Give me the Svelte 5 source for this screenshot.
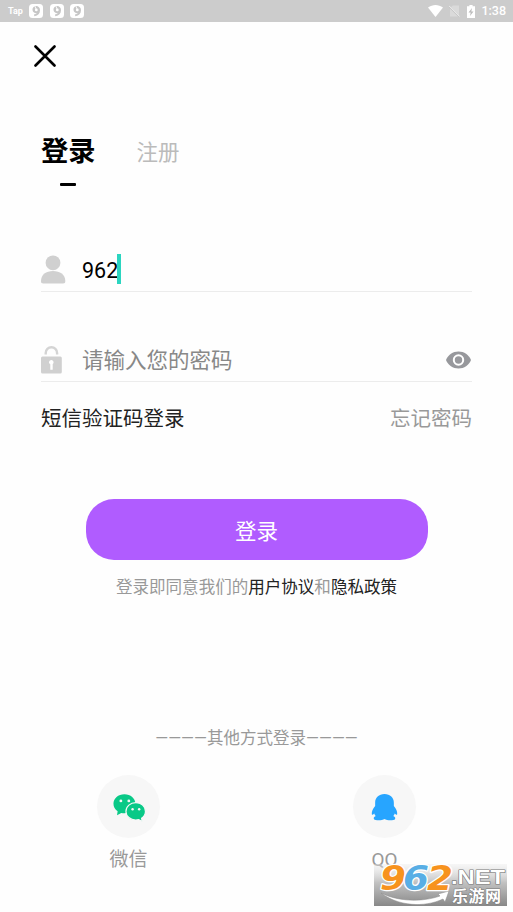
<script lang="ts">
  let account = '962';
  let password = '';

  // notification badges shown next to the "Tap" label
  const badges = [0, 1, 2];
</script>

<div class="screen">
  <header class="status">
    <span class="tap">Tap</span>
    {#each badges as badge (badge)}
      <svg class="badge" viewBox="0 0 14 14" aria-hidden="true">
        <rect width="14" height="14" rx="3.5" fill="#fff" />
        <path d="M7 2a4 4 0 0 1 4 4.200c0 3.300-2 5.500-5.600 6l-.5-1.600c1.500-.3 2.500-.8 3-1.500A3.600 3.600 0 1 1 7 2z" fill="#c6c6c6" />
        <circle cx="7.300" cy="5.900" r="1.400" fill="#fff" />
        <path d="M5.800 2l1.500 3.500" stroke="#fff" stroke-width=".9" />
      </svg>
    {/each}
    <div class="system">
      <svg width="15" height="12" viewBox="0 0 15 12" aria-hidden="true">
        <path d="M0 2.600C4.500-.8 10.500-.8 15 2.600L7.500 12z" fill="#fff" />
      </svg>
      <svg width="11" height="12" viewBox="0 0 11 12" aria-hidden="true">
        <path d="M3.800.5H10V11.500H1V3.300z" fill="#dadada" />
        <path d="M0 1.500l10.700 10.500" stroke="#c4c4c4" stroke-width="1.500" />
        <path d="M0 .8l10.800 10.800" stroke="#f0f0f0" stroke-width="1" />
      </svg>
      <svg width="8" height="13" viewBox="0 0 8 13" aria-hidden="true">
        <path d="M2.400 0h3.200v1.300H8V13H0V1.300h2.400z" fill="#fff" />
        <path d="M5 3L1.500 7.600h2.200L3 11l3.500-4.600H4.300z" fill="#bbb" />
      </svg>
      <span class="time">1:38</span>
    </div>
  </header>

  <main>
    <button class="close" type="button" aria-label="关闭">
      <svg width="22" height="22" viewBox="0 0 22 22">
        <path d="M1.500 1.500l19 19M20.500 1.500l-19 19" stroke="#000" stroke-width="2.600" stroke-linecap="round" />
      </svg>
    </button>

    <nav class="tabs">
      <button class="tab active" type="button">登录</button>
      <button class="tab" type="button">注册</button>
    </nav>

    <div class="field account">
      <svg class="icon" width="25" height="29" viewBox="0 0 25 29" aria-hidden="true">
        <circle cx="12" cy="7.800" r="7.400" fill="#d0d0d0" />
        <path d="M0 26C0 19.500 5 16 12 16s12.300 3.500 12.300 10c0 1.800-.6 2.500-2.300 2.500H2.300C.6 28.500 0 27.800 0 26z" fill="#d0d0d0" />
      </svg>
      <span class="value">{account}</span>
      <span class="caret"></span>
    </div>

    <div class="field password">
      <svg class="icon" width="25" height="29" viewBox="0 0 25 29" aria-hidden="true">
        <path d="M4.700 9.500V8a5.700 5.700 0 0 1 11.400 0v1.500" fill="none" stroke="#d4d4d4" stroke-width="2.400" />
        <rect y="11.500" width="20.800" height="17" rx="1.500" fill="#d0d0d0" />
        <path d="M8 17.500a2.300 2.300 0 1 1 3.700 1.600v5.700H9.300v-5.500A2.300 2.300 0 0 1 8 17.500z" fill="#fff" />
      </svg>
      <input type="text" placeholder="请输入您的密码" bind:value={password} />
      <svg class="eye" width="25" height="18" viewBox="0 0 25 18" aria-hidden="true">
        <path d="M0 9C2.200 3.700 6.800.5 12.500.5S22.800 3.700 25 9c-2.200 5.300-6.800 8.500-12.500 8.500S2.200 14.300 0 9z" fill="#97989c" />
        <circle cx="12.500" cy="9" r="4.700" fill="#97989c" stroke="#fff" stroke-width="2" />
      </svg>
    </div>

    <div class="links">
      <span class="sms">短信验证码登录</span>
      <span class="forgot">忘记密码</span>
    </div>

    <button class="submit" type="button">登录</button>
    <p class="terms">登录即同意我们的<b>用户协议</b>和<b>隐私政策</b></p>

    <p class="other">————其他方式登录————</p>
    <div class="providers">
      <div class="provider">
        <span class="disc">
          <svg width="63" height="63" viewBox="0 0 62 62" aria-hidden="true">
            <path d="M27 19c-6.200 0-10.800 4.200-10.800 9.300 0 3 1.500 5.600 4.100 7.400l-.6 4 4.200-2.400c1 .3 2 .4 3.100.4 6 0 10.800-4.200 10.800-9.400S33 19 27 19z" fill="#09c987" />
            <path d="M38.200 27.200c-5.300 0-9.700 3.700-9.700 8.600s4.400 8.500 9.700 8.500c1 0 1.900-.1 2.800-.4l3.600 2-.7-3.400c2.400-1.600 3.800-4 3.800-6.700 0-4.900-4.200-8.600-9.500-8.600z" fill="#09c987" stroke="#f7f7f7" stroke-width="1.200" />
            <g fill="#f7f7f7">
              <circle cx="23.500" cy="25.500" r="1.400" />
              <circle cx="31.300" cy="25.500" r="1.400" />
              <circle cx="35" cy="33.700" r="1.200" />
              <circle cx="41.500" cy="33.700" r="1.200" />
            </g>
          </svg>
        </span>
        <span>微信</span>
      </div>
      <div class="provider">
        <span class="disc">
          <svg width="63" height="63" viewBox="0 0 62 62" aria-hidden="true">
            <path d="M31 18.800c-5.600 0-9.200 3.500-9.200 8.600v3.100c-2.200 2.700-3.500 5.500-3.300 7.800.1 1.300 1 1 2.400-.4.400 1 .8 1.800 1.500 2.500-2 .9-2.400 2.100-1.700 3.100.9 1.300 8 1.400 10.300-.2 2.300 1.600 9.400 1.500 10.300.2.700-1 .3-2.200-1.700-3.100.7-.7 1.100-1.500 1.500-2.500 1.400 1.400 2.300 1.700 2.400.4.200-2.300-1.100-5.100-3.300-7.800v-3.100c0-5.100-3.600-8.600-9.200-8.600z" fill="#27a5ff" />
          </svg>
        </span>
        <span>QQ</span>
      </div>
    </div>
  </main>

  <!-- site mark laid over the lower right corner -->
  <svg class="mark" width="133" height="42" viewBox="0 0 133 42">
    <defs>
      <linearGradient id="shade" x1="0" y1="0" x2="0" y2="1">
        <stop offset="0" stop-color="#e8e8e8" stop-opacity=".35" />
        <stop offset=".45" stop-color="#bdbdbd" stop-opacity=".95" />
        <stop offset="1" stop-color="#888" />
      </linearGradient>
    </defs>
    <rect width="133" height="42" fill="url(#shade)" />
    <path d="M7 29c18 9 42 9 59 3l-2-2 11-3-4 11-2-3C50 44 24 42 7 29z" fill="#fff" stroke="#888" stroke-width=".5" />
    <g class="digits">
      <text x="6" y="26" textLength="26" lengthAdjust="spacingAndGlyphs" fill="#f7931e">9</text>
      <text x="29" y="26" textLength="26" lengthAdjust="spacingAndGlyphs" fill="#58aee5">6</text>
      <text x="53" y="26" textLength="26" lengthAdjust="spacingAndGlyphs" fill="#f7931e">2</text>
    </g>
    <text class="net" x="77" y="20" textLength="54" lengthAdjust="spacingAndGlyphs">.NET</text>
    <text class="site" x="78" y="38" textLength="49">乐游网</text>
  </svg>
</div>

<style>
  :global(body) {
    background: #fefefe;
  }

  .screen {
    position: relative;
    height: 912px;
    overflow: hidden;
    font-family: Roboto, 'Noto Sans CJK SC', sans-serif;
    color: #999;
  }

  button {
    border: 0;
    padding: 0;
    background: none;
    font-family: inherit;
  }

  p {
    margin: 0;
    text-align: center;
    font-size: 16.55px;
    line-height: 24px;
    white-space: nowrap;
  }

  .status {
    display: flex;
    align-items: center;
    box-sizing: border-box;
    height: 22px;
    padding: 0 7px 0 8px;
    background: #ccc;
    color: #fff;
  }

  .tap {
    width: 21px;
    font-size: 9px;
    line-height: 20px;
    font-weight: 700;
  }

  .badge {
    width: 14px;
    height: 14px;
    margin-right: 6.5px;
  }

  .system {
    display: flex;
    align-items: center;
    margin-left: auto;
  }

  .system svg + svg {
    margin-left: 6px;
  }

  .system svg:nth-child(3) {
    margin-left: 7px;
  }

  .time {
    margin-left: 6px;
    font-size: 12.5px;
    font-weight: 500;
    line-height: 22px;
  }

  main {
    padding: 23px 41px 0;
  }

  .close {
    display: block;
    width: 22px;
    height: 22px;
    margin-left: -7px;
  }

  .close svg {
    display: block;
  }

  .tabs {
    display: flex;
    align-items: flex-start;
    gap: 41px;
    height: 119px;
    padding-top: 65px;
    box-sizing: border-box;
  }

  .tab {
    height: 40px;
    font-size: 21.5px;
    line-height: 41px;
    color: #bbb;
  }

  .tab.active {
    height: auto;
    font-size: 27.3px;
    font-weight: 700;
    color: #000;
  }

  .tab.active::after {
    content: '';
    display: block;
    width: 16px;
    height: 3px;
    margin: 10px auto 0;
    border-radius: 1px;
    background: #000;
  }

  .field {
    display: flex;
    align-items: center;
    box-sizing: border-box;
    height: 44px;
    border-bottom: 1px solid #ececec;
  }

  .account {
    margin-top: 62px;
  }

  .password {
    margin-top: 46px;
  }

  .icon {
    flex: none;
    margin-right: 16px;
  }

  .value {
    padding-top: 2px;
    font-size: 21.5px;
    line-height: 42px;
    color: #000;
  }

  .caret {
    width: 4px;
    height: 30px;
    margin: 0 0 2px -1px;
    background: #2bd5c0;
  }

  input {
    flex: 1;
    min-width: 0;
    padding: 3px 0 0;
    border: 0;
    outline: 0;
    background: none;
    font-family: inherit;
    font-size: 21.5px;
    line-height: 40px;
  }

  input::placeholder {
    color: #888;
  }

  .eye {
    margin-right: 1px;
  }

  .links {
    display: flex;
    justify-content: space-between;
    margin-top: 21px;
    font-size: 20.5px;
    line-height: 32px;
  }

  .sms {
    color: #222;
  }

  .submit {
    display: block;
    width: 342px;
    height: 61px;
    margin: 64px auto 0;
    border-radius: 28px;
    background: #b05cff;
    font-size: 21.5px;
    color: #fff;
  }

  .terms {
    margin-top: 16px;
  }

  .terms b {
    font-weight: 400;
    color: #222;
  }

  .other {
    margin-top: 127px;
  }

  .providers {
    display: flex;
    justify-content: space-between;
    margin-top: 24px;
    padding: 0 56px;
  }

  .provider {
    display: flex;
    flex-direction: column;
    align-items: center;
    width: 63px;
    font-size: 19px;
    line-height: 43px;
  }

  .disc {
    width: 63px;
    height: 63px;
    border-radius: 50%;
    background: #f7f7f7;
  }

  .disc svg {
    display: block;
  }

  .mark {
    position: absolute;
    left: 374px;
    top: 864px;
    overflow: visible;
  }

  .mark text {
    paint-order: stroke;
    stroke-linejoin: round;
  }

  .digits {
    font: italic 700 33px 'DejaVu Sans', sans-serif;
    stroke: #fff;
    stroke-width: 2.5px;
  }

  .net {
    font: 700 20px 'Liberation Sans', sans-serif;
    fill: #fff;
    stroke: #777;
    stroke-width: 1.2px;
  }

  .site {
    font: 700 16px 'Noto Sans CJK SC', sans-serif;
    fill: #fff;
    stroke: #777;
    stroke-width: 1px;
  }
</style>
